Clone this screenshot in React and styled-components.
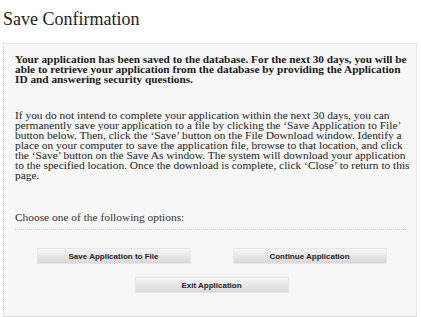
import { createGlobalStyle, styled } from 'styled-components';

const GlobalStyle = createGlobalStyle`
  body {
    margin: 0;
    background: #fff;
    font-family: "Liberation Serif", "Times New Roman", serif;
    color: #111;
  }
`;

export default function App() {
  return (
    <Page>
      <GlobalStyle />
      <Title>Save Confirmation</Title>
      <Panel>
        <Notice>
          Your application has been saved to the database. For the next 30 days, you will be<br />
          able to retrieve your application from the database by providing the Application<br />
          ID and answering security questions.
        </Notice>
        <Body>
          If you do not intend to complete your application within the next 30 days, you can<br />
          permanently save your application to a file by clicking the ‘Save Application to File’<br />
          button below. Then, click the ‘Save’ button on the File Download window. Identify a<br />
          place on your computer to save the application file, browse to that location, and click<br />
          the ‘Save’ button on the Save As window. The system will download your application<br />
          to the specified location. Once the download is complete, click ‘Close’ to return to this<br />
          page.
        </Body>
        <Prompt>Choose one of the following options:</Prompt>
        <Options>
          <Button>Save Application to File</Button>
          <Button>Continue Application</Button>
          <Button $wide>Exit Application</Button>
        </Options>
      </Panel>
    </Page>
  );
}

const Page = styled.div`
  width: 421px;
  height: 317px;
  padding: 8px 4px 0 3px;
  box-sizing: border-box;
  overflow: hidden;
`;

const Title = styled.h1`
  margin: 0;
  font-size: 18px;
  font-weight: 400;
  line-height: 22px;
  color: #222;
`;

const Panel = styled.div`
  margin-top: 13px;
  padding: 10px 8px 24px 11px;
  background: #f7f7f7;
  border-top: 1px dotted #d6d6d6;
  border-left: 1px dotted #d6d6d6;
  border-right: 1px solid #e4e4e4;
  border-bottom: 2px solid #dadada;
`;

const Notice = styled.p`
  margin: 0;
  font-size: 11.3px;
  line-height: 10px;
  font-weight: 700;
  color: #1a1a1a;
  white-space: nowrap;
`;

const Body = styled.p`
  margin: 26px 0 0;
  font-size: 11.4px;
  line-height: 10px;
  color: #222;
  white-space: nowrap;
`;

const Prompt = styled.p`
  margin: 31px 2px 0 0;
  padding-bottom: 6px;
  font-size: 11.4px;
  line-height: 12px;
  color: #333;
  border-bottom: 1px dotted #cfcfcf;
`;

const Options = styled.div`
  display: grid;
  grid-template-columns: 152px 152px;
  justify-content: center;
  column-gap: 44px;
  row-gap: 15px;
  margin-top: 19px;
`;

const Button = styled.button`
  grid-column: ${(p) => (p.$wide ? '1 / span 2' : 'auto')};
  justify-self: center;
  width: 152px;
  height: 14px;
  padding: 0;
  border: none;
  background: linear-gradient(#f6f6f6, #d9d9d9);
  box-shadow: 0 0 0 1px #e6e6e6;
  font-family: "Liberation Sans", Arial, sans-serif;
  font-size: 8px;
  font-weight: 700;
  color: #222;
  cursor: pointer;
`;
